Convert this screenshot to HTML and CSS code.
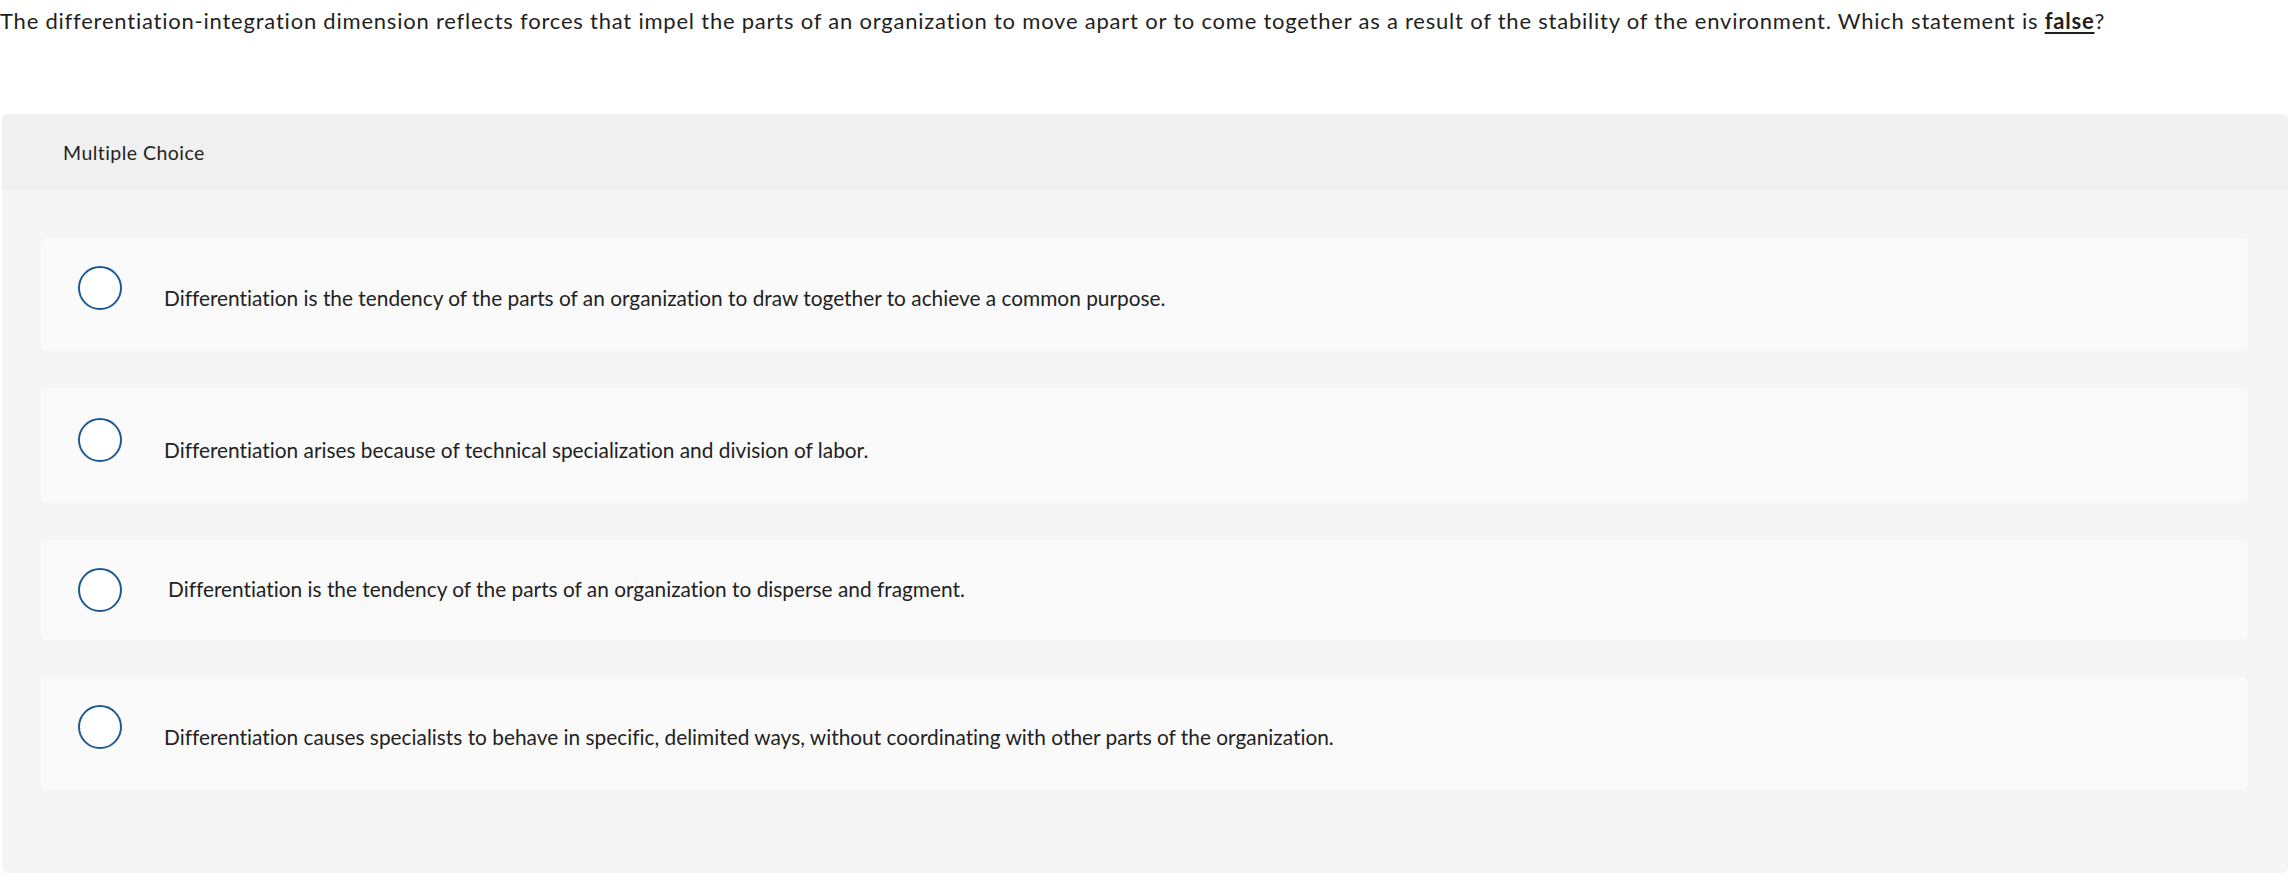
FILE: index.html
```html
<!DOCTYPE html>
<html lang="en">
<head>
<meta charset="utf-8">
<title>Multiple Choice</title>
<link rel="stylesheet" href="styles.css">
</head>
<body>
<p class="question">The differentiation-integration dimension reflects forces that impel the parts of an organization to move apart or to come together as a result of the stability of the environment. Which statement is <strong class="emph">false</strong>?</p>

<section class="card">
  <header class="card-header">Multiple Choice</header>
  <div class="card-body">
    <label class="option">
      <span class="radio"></span>
      <span class="choice-text">Differentiation is the tendency of the parts of an organization to draw together to achieve a common purpose.</span>
    </label>
    <label class="option option--alt">
      <span class="radio"></span>
      <span class="choice-text">Differentiation arises because of technical specialization and division of labor.</span>
    </label>
    <label class="option">
      <span class="radio"></span>
      <span class="choice-text choice-text--plain">Differentiation is the tendency of the parts of an organization to disperse and fragment.</span>
    </label>
    <label class="option">
      <span class="radio"></span>
      <span class="choice-text">Differentiation causes specialists to behave in specific, delimited ways, without coordinating with other parts of the organization.</span>
    </label>
  </div>
</section>
</body>
</html>
```
FILE: styles.css
```css
* { box-sizing: border-box; }

body {
  margin: 0;
  background: #ffffff;
  font-family: Lato, "Open Sans", sans-serif;
  font-variant-ligatures: no-common-ligatures;
  color: #222222;
}

.question {
  margin: 0;
  padding-top: 4px;
  font-size: 22px;
  line-height: 33px;
  letter-spacing: 0.78px;
  color: #1f1f1f;
  white-space: nowrap;
}

.emph {
  font-weight: 700;
  text-decoration: underline;
  text-decoration-thickness: 2px;
  text-underline-offset: 3px;
}

.card {
  margin: 77px 8px 0 2px;
  background: #f5f5f5;
  border-radius: 5px;
  overflow: hidden;
}

.card-header {
  display: block;
  height: 76px;
  padding: 1px 0 0 61px;
  line-height: 75px;
  background: #f0f0f0;
  font-size: 19.5px;
  letter-spacing: 0.45px;
  color: #222222;
}

.card-body {
  display: flex;
  flex-direction: column;
  gap: 37px;
  padding: 48px 40px 83px 39px;
}

.option {
  display: flex;
  align-items: flex-start;
  gap: 42px;
  padding: 28px 24px 28px 37px;
  background: #fafafa;
  border-radius: 5px;
  cursor: pointer;
}

.option--alt {
  padding-top: 30px;
}

.radio {
  flex: none;
  width: 44px;
  height: 44px;
  border: 2px solid #1d5a93;
  border-radius: 50%;
  background: #ffffff;
}

.choice-text {
  padding: 17px 0 10px;
  font-size: 20.85px;
  line-height: 30px;
  color: #222222;
}

.choice-text--plain {
  padding: 6px 0 0 4px;
}
```
